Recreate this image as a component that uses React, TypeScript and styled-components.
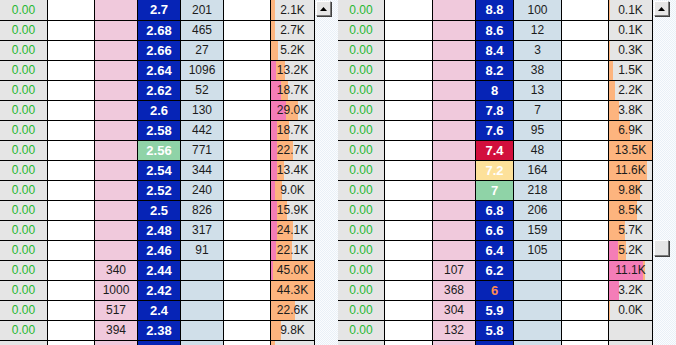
import React from "react";
import styled, { createGlobalStyle } from "styled-components";

const Global = createGlobalStyle`
  html, body { margin: 0; padding: 0; background: #ffffff; overflow: hidden; }
  body { font-family: "Liberation Sans", Arial, sans-serif; }
`;

type Tone = "blue" | "green" | "red" | "yellow" | "hot";

interface Row {
  bid: string;
  price: string;
  tone?: Tone;
  vol: string;
  total: string;
  pink: number;
  orange: number;
}

const leftRows: Row[] = [
  { bid: "", price: "2.7", vol: "201", total: "2.1K", pink: 0, orange: 4 },
  { bid: "", price: "2.68", vol: "465", total: "2.7K", pink: 0, orange: 4 },
  { bid: "", price: "2.66", vol: "27", total: "5.2K", pink: 0, orange: 7 },
  { bid: "", price: "2.64", vol: "1096", total: "13.2K", pink: 5, orange: 14 },
  { bid: "", price: "2.62", vol: "52", total: "18.7K", pink: 10, orange: 17 },
  { bid: "", price: "2.6", vol: "130", total: "29.0K", pink: 15, orange: 27 },
  { bid: "", price: "2.58", vol: "442", total: "18.7K", pink: 6, orange: 18 },
  { bid: "", price: "2.56", tone: "green", vol: "771", total: "22.7K", pink: 6, orange: 22 },
  { bid: "", price: "2.54", vol: "344", total: "13.4K", pink: 6, orange: 13 },
  { bid: "", price: "2.52", vol: "240", total: "9.0K", pink: 4, orange: 11 },
  { bid: "", price: "2.5", vol: "826", total: "15.9K", pink: 6, orange: 16 },
  { bid: "", price: "2.48", vol: "317", total: "24.1K", pink: 6, orange: 22 },
  { bid: "", price: "2.46", vol: "91", total: "22.1K", pink: 5, orange: 21 },
  { bid: "340", price: "2.44", vol: "", total: "45.0K", pink: 2, orange: 43 },
  { bid: "1000", price: "2.42", vol: "", total: "44.3K", pink: 0, orange: 43 },
  { bid: "517", price: "2.4", vol: "", total: "22.6K", pink: 0, orange: 24 },
  { bid: "394", price: "2.38", vol: "", total: "9.8K", pink: 0, orange: 10 },
  { bid: "", price: "", vol: "", total: "", pink: 0, orange: 4 },
];

const rightRows: Row[] = [
  { bid: "", price: "8.8", vol: "100", total: "0.1K", pink: 0, orange: 1 },
  { bid: "", price: "8.6", vol: "12", total: "0.1K", pink: 0, orange: 0 },
  { bid: "", price: "8.4", vol: "3", total: "0.3K", pink: 0, orange: 1 },
  { bid: "", price: "8.2", vol: "38", total: "1.5K", pink: 0, orange: 4 },
  { bid: "", price: "8", vol: "13", total: "2.2K", pink: 0, orange: 6 },
  { bid: "", price: "7.8", vol: "7", total: "3.8K", pink: 0, orange: 10 },
  { bid: "", price: "7.6", vol: "95", total: "6.9K", pink: 0, orange: 21 },
  { bid: "", price: "7.4", tone: "red", vol: "48", total: "13.5K", pink: 0, orange: 43 },
  { bid: "", price: "7.2", tone: "yellow", vol: "164", total: "11.6K", pink: 0, orange: 38 },
  { bid: "", price: "7", tone: "green", vol: "218", total: "9.8K", pink: 0, orange: 31 },
  { bid: "", price: "6.8", vol: "206", total: "8.5K", pink: 0, orange: 28 },
  { bid: "", price: "6.6", vol: "159", total: "5.7K", pink: 0, orange: 16 },
  { bid: "", price: "6.4", vol: "105", total: "5.2K", pink: 9, orange: 17 },
  { bid: "107", price: "6.2", vol: "", total: "11.1K", pink: 34, orange: 36 },
  { bid: "368", price: "6", tone: "hot", vol: "", total: "3.2K", pink: 10, orange: 10 },
  { bid: "304", price: "5.9", vol: "", total: "0.0K", pink: 0, orange: 1 },
  { bid: "132", price: "5.8", vol: "", total: "", pink: 0, orange: 0 },
  { bid: "", price: "", vol: "", total: "", pink: 0, orange: 0 },
];

const Page = styled.div`
  display: flex;
  width: 676px;
  height: 345px;
  overflow: hidden;
`;

const Panel = styled.div`
  display: flex;
  width: 338px;
  height: 345px;
`;

const Grid = styled.div`
  width: 315px;
  display: flex;
  flex-direction: column;
`;

const RowLine = styled.div<{ $cols: string }>`
  box-sizing: border-box;
  display: grid;
  grid-template-columns: ${(p) => p.$cols};
  height: 20px;
  flex: none;
  border-bottom: 1px solid #000;
  &:first-child {
    height: 21px;
  }
  &:first-child > div {
    height: 20px;
    line-height: 20px;
  }
`;

const Cell = styled.div`
  box-sizing: border-box;
  height: 19px;
  line-height: 19px;
  border-right: 1px solid #000;
  text-align: center;
  font-size: 12px;
  color: #1c1c1c;
  white-space: nowrap;
  overflow: hidden;
`;

const ZeroCell = styled(Cell)`
  background: #e5e5e5;
  color: #27b832;
`;

const BlankCell = styled(Cell)`
  background: #ffffff;
`;

const BidCell = styled(Cell)`
  background: #f0c9dc;
`;

const toneBg: Record<Tone, string> = {
  blue: "#0624b6",
  green: "#8fd3a7",
  red: "#d20f3c",
  yellow: "#fde19a",
  hot: "#0624b6",
};

const PriceCell = styled(Cell)<{ $tone: Tone }>`
  background: ${(p) => toneBg[p.$tone]};
  color: ${(p) => (p.$tone === "hot" ? "#ff8c52" : "#ffffff")};
  font-weight: bold;
  font-size: 13px;
`;

const VolCell = styled(Cell)`
  background: #d0dfe9;
`;

const TotalCell = styled(Cell)<{ $pink: number; $orange: number }>`
  background: linear-gradient(
    to right,
    #f47db7 0,
    #f47db7 ${(p) => p.$pink}px,
    #fdb47e ${(p) => p.$pink}px,
    #fdb47e ${(p) => p.$orange}px,
    #e5e5e5 ${(p) => p.$orange}px
  );
`;

const Track = styled.div`
  width: 23px;
  height: 345px;
  display: flex;
  flex-direction: column;
  background-color: #f3f6fa;
  background-image: repeating-conic-gradient(#e9f0f7 0 25%, #fbfcfe 0 50%);
  background-size: 2px 2px;
`;

const ScrollButton = styled.div`
  box-sizing: border-box;
  width: 15px;
  height: 15px;
  margin: 1px 0 0 1px;
  background: #e6e6e6;
  border: 1px solid;
  border-color: #ffffff #7a7a7a #7a7a7a #ffffff;
  box-shadow: 1px 1px 0 #404040;
  display: flex;
  align-items: center;
  justify-content: center;
`;

const Thumb = styled.div<{ $top: number }>`
  box-sizing: border-box;
  width: 15px;
  height: 16px;
  margin: ${(p) => p.$top}px 0 0 1px;
  background: #e6e6e6;
  border: 1px solid;
  border-color: #ffffff #7a7a7a #7a7a7a #ffffff;
  box-shadow: 1px 1px 0 #404040;
`;

const UpArrow = () => (
  <svg width="7" height="4" viewBox="0 0 7 4">
    <polygon points="3.5,0 7,4 0,4" fill="#000" />
  </svg>
);

const Table = ({ rows, cols, thumb }: { rows: Row[]; cols: string; thumb?: number }) => (
  <Panel>
    <Grid>
      {rows.map((r, i) => (
        <RowLine key={i} $cols={cols}>
          <ZeroCell>{r.price ? "0.00" : ""}</ZeroCell>
          <BlankCell />
          <BidCell>{r.bid}</BidCell>
          <PriceCell $tone={r.tone ?? "blue"}>{r.price}</PriceCell>
          <VolCell>{r.vol}</VolCell>
          <BlankCell />
          <TotalCell $pink={r.pink} $orange={r.orange}>
            {r.total}
          </TotalCell>
        </RowLine>
      ))}
    </Grid>
    <Track>
      <ScrollButton>
        <UpArrow />
      </ScrollButton>
      {thumb !== undefined && <Thumb $top={thumb} />}
    </Track>
  </Panel>
);

export default function App() {
  return (
    <>
      <Global />
      <Page>
        <Table rows={leftRows} cols="48px 47px 43px 43px 43px 47px 44px" />
        <Table rows={rightRows} cols="47px 48px 43px 38px 48px 47px 44px" thumb={224} />
      </Page>
    </>
  );
}
